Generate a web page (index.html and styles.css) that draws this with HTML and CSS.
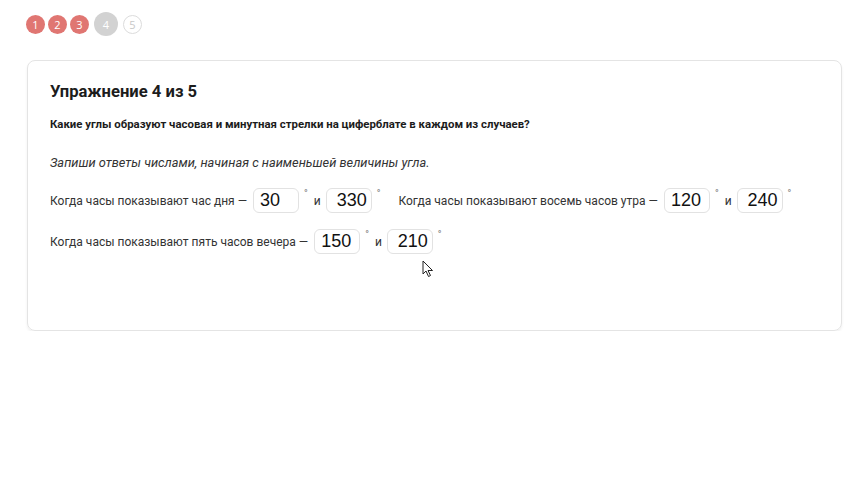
FILE: index.html
```html
<!DOCTYPE html>
<html lang="ru">
<head>
<meta charset="utf-8">
<link rel="stylesheet" href="styles.css">
</head>
<body>
<div class="steps">
  <span class="step done">1</span>
  <span class="step done">2</span>
  <span class="step done">3</span>
  <span class="step current">4</span>
  <span class="step todo">5</span>
</div>
<div class="card">
  <h1 class="title">Упражнение 4 из 5</h1>
  <p class="question">Какие углы образуют часовая и минутная стрелки на циферблате в каждом из случаев?</p>
  <p class="hint">Запиши ответы числами, начиная с наименьшей величины угла.</p>
  <div class="items">
    <div class="item">
      <span class="label">Когда часы показывают час дня —</span>
      <span class="box left">30</span><span class="deg">°</span>
      <span class="and">и</span>
      <span class="box right">330</span><span class="deg">°</span>
    </div>
    <div class="item">
      <span class="label">Когда часы показывают восемь часов утра —</span>
      <span class="box left">120</span><span class="deg">°</span>
      <span class="and">и</span>
      <span class="box right">240</span><span class="deg">°</span>
    </div>
    <div class="item">
      <span class="label">Когда часы показывают пять часов вечера —</span>
      <span class="box left">150</span><span class="deg">°</span>
      <span class="and">и</span>
      <span class="box right">210</span><span class="deg">°</span>
    </div>
  </div>
  <svg class="cursor" width="12" height="18" viewBox="0 0 12 18"><path d="M1 1 L1 14 L4 11 L6.5 16.5 L8.5 15.5 L6 10.5 L10.5 10.5 Z" fill="#fff" stroke="#222" stroke-width="1" stroke-linejoin="round"/></svg>
</div>
</body>
</html>
```
FILE: styles.css
```css
* { box-sizing: border-box; }
body {
  margin: 0;
  background: #fff;
  font-family: Roboto, "Noto Sans", sans-serif;
  color: #222;
}
.steps {
  display: flex;
  align-items: center;
  gap: 3px;
  padding: 12px 0 0 26px;
  height: 36px;
}
.step {
  width: 19px;
  height: 19px;
  border-radius: 50%;
  display: flex;
  align-items: center;
  justify-content: center;
  font-size: 11px;
  font-family: "Open Sans", sans-serif;
}
.step.done { background: #e07672; color: #fff; }
.step.current {
  width: 24px; height: 24px;
  background: #d2d2d2; color: #fff;
  margin: 0 2px;
}
.step.todo {
  background: #fff; color: #c8c8c8;
  border: 1px solid #dcdcdc;
}
.card {
  position: relative;
  margin: 24px 0 0 27px;
  width: 815px;
  height: 271px;
  border: 1px solid #e4e4e4;
  border-radius: 8px;
  box-shadow: 0 2px 3px rgba(0,0,0,0.06);
  padding: 19px 22px;
}
.title {
  margin: 0;
  font-size: 16.6px;
  font-weight: 700;
  line-height: 24px;
  color: #1c1c1c;
}
.question {
  margin: 12px 0 0;
  font-size: 11.4px;
  font-weight: 700;
  line-height: 16px;
  color: #1c1c1c;
}
.hint {
  margin: 22px 0 0;
  font-size: 12.8px;
  font-style: italic;
  line-height: 18px;
  color: #333;
}
.items {
  margin-top: 16px;
  display: flex;
  flex-wrap: wrap;
  column-gap: 18px;
  row-gap: 16px;
}
.item {
  display: flex;
  align-items: center;
  font-size: 12px;
  color: #333;
}
.label { margin-right: 6px; }
.box {
  display: inline-block;
  width: 46px;
  height: 25px;
  border: 1px solid #e2e2e2;
  border-radius: 6px;
  font-family: "Liberation Sans", Arial, sans-serif;
  font-size: 18px;
  line-height: 22px;
  color: #111;
  padding: 0 4px 0 6px;
}
.box.right { text-align: right; }
.deg {
  align-self: flex-start;
  font-size: 10px;
  color: #777;
  margin: 0 0 0 5px;
  line-height: 12px;
}
.and { margin: 0 5px 0 6px; }
.cursor {
  position: absolute;
  left: 394px;
  top: 199px;
}
```
